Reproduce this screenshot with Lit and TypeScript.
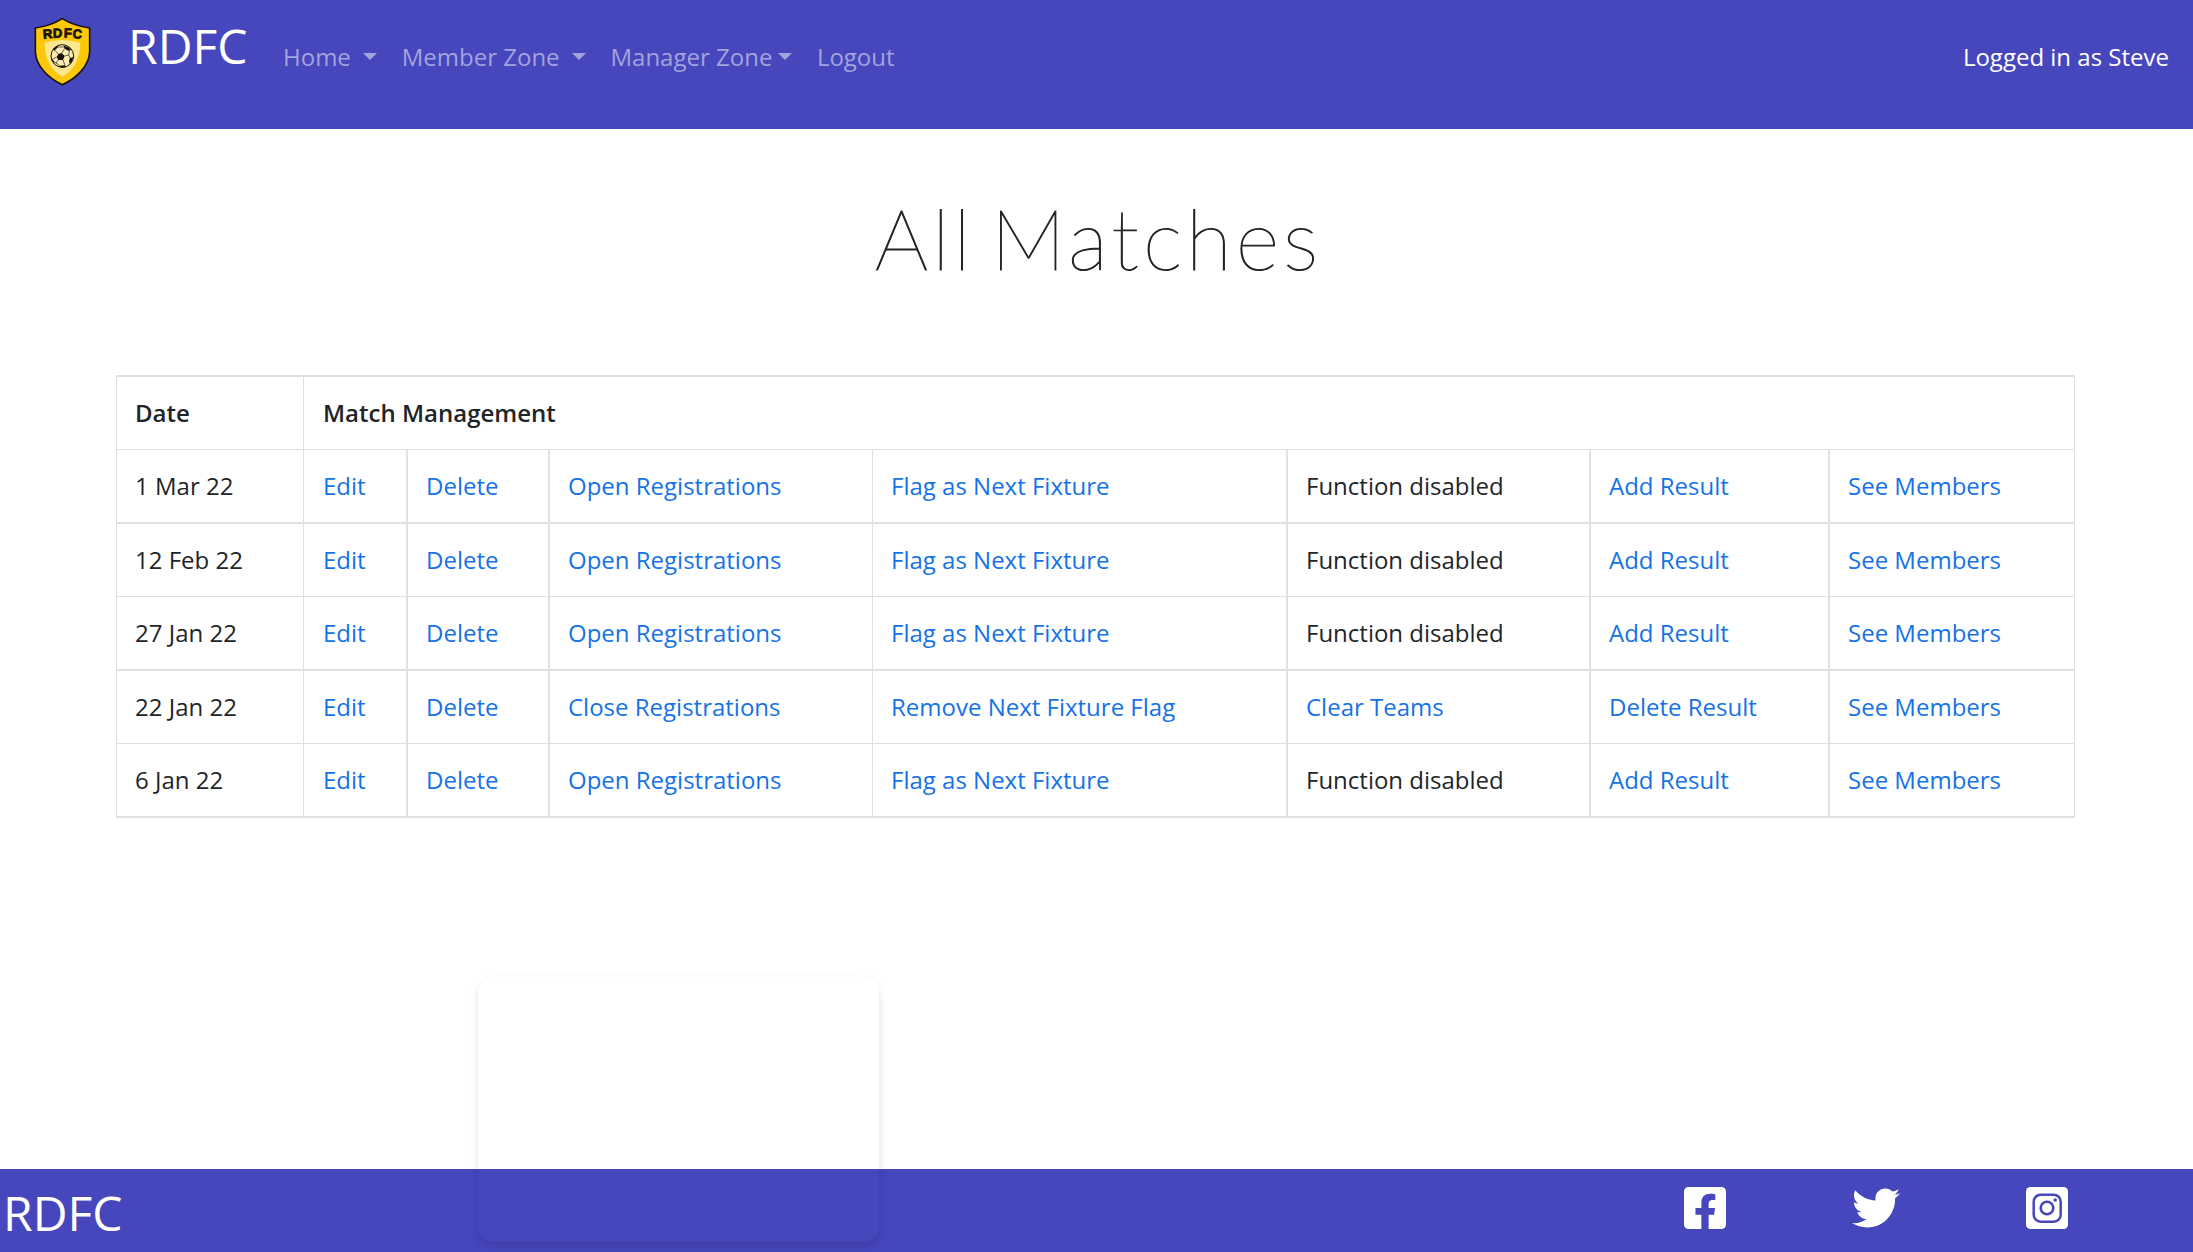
import { LitElement, html, css, svg } from "lit";
import { customElement } from "lit/decorators.js";

type Cell = { text: string; link?: boolean };
type Match = { date: string; actions: Cell[] };

const link = (text: string): Cell => ({ text, link: true });

const standard = (date: string): Match => ({
  date,
  actions: [
    link("Edit"),
    link("Delete"),
    link("Open Registrations"),
    link("Flag as Next Fixture"),
    { text: "Function disabled" },
    link("Add Result"),
    link("See Members"),
  ],
});

const MATCHES: Match[] = [
  standard("1 Mar 22"),
  standard("12 Feb 22"),
  standard("27 Jan 22"),
  {
    date: "22 Jan 22",
    actions: [
      link("Edit"),
      link("Delete"),
      link("Close Registrations"),
      link("Remove Next Fixture Flag"),
      link("Clear Teams"),
      link("Delete Result"),
      link("See Members"),
    ],
  },
  standard("6 Jan 22"),
];

const crest = svg`
  <path d="M127 26C103 41 76 50 46 54V126C48 166 82 204 127 224C172 204 207 166 209 126V54C179 50 151 41 127 26Z"
    fill="#fdc70a" stroke="#17140c" stroke-width="5" stroke-linejoin="round"/>
  <path d="M74 98Q127 82 181 98C181 142 164 178 127 200C90 178 74 142 74 98Z" fill="#fde68d"/>
  <text x="70 99 131 157" y="86 83 82 84" rotate="-5 -2 2 5" class="crest-text">RDFC</text>
  <circle cx="127" cy="138" r="34" fill="#fdedb0" stroke="#17140c" stroke-width="3"/>
  <path d="M115 132L125 129L134 138L129 150L115 150L110 141Z M130 107Q146 108 153 120L146 123L134 116Z
    M98 118Q104 110 113 107L114 112L103 122Z M150 144L160 141Q158 155 149 162L147 153Z
    M94 143L101 152L104 161Q95 155 94 143Z M119 167L135 166L138 171Q128 174 118 171Z" fill="#17140c"/>
  <path d="M125 129L134 116M134 138L146 135L150 144M146 135L148 123M129 150L135 166M115 150L108 159M119 167L108 159L102 155M110 141L99 147M115 132L105 121M114 111L131 111"
    fill="none" stroke="#17140c" stroke-width="2"/>
`;

@customElement("app-root")
export class AppRoot extends LitElement {
  static styles = css`
    :host {
      display: block;
      font-family: "Open Sans", sans-serif;
      font-size: 24px;
      line-height: 36px;
      color: #212529;
    }
    .page {
      position: relative;
      display: flex;
      flex-direction: column;
      height: 1252px;
      overflow: hidden;
      background: #fff;
    }
    .navbar {
      display: flex;
      align-items: flex-start;
      height: 129px;
      flex: none;
      box-sizing: border-box;
      padding: 14px 24px 0 32px;
      background: #4646bd;
    }
    .crest {
      display: block;
      width: 60px;
      height: 71px;
      margin-top: 2px;
      flex: none;
    }
    .crest-text {
      font-family: "Liberation Sans", sans-serif;
      font-weight: 700;
      font-size: 39px;
      fill: #17140c;
      stroke: #17140c;
      stroke-width: 2.5px;
    }
    .brand {
      margin-left: 36px;
      width: 155px;
      flex: none;
      font-size: 48px;
      line-height: 64px;
      color: #fff;
    }
    .nav-items {
      display: flex;
      flex: 1;
      margin: 0;
      padding: 25px 0 0;
      list-style: none;
    }
    .nav-item {
      display: flex;
      align-items: center;
      box-sizing: border-box;
      padding-right: 24.5px;
      color: #a3a3de;
      white-space: nowrap;
    }
    .caret {
      border-top: 7px solid;
      border-left: 7px solid transparent;
      border-right: 7px solid transparent;
      margin: -1px 0 0 6px;
    }
    .caret.spaced {
      margin-left: 12.4px;
    }
    .user {
      padding-top: 25px;
      color: #fff;
      white-space: nowrap;
    }
    .title {
      margin: 0;
      padding-top: 58px;
      padding-left: 4px;
      flex: none;
      height: 188px;
      text-align: center;
      font-family: Lato, sans-serif;
      font-weight: 100;
      font-size: 84px;
      line-height: 101px;
      letter-spacing: 4px;
      word-spacing: -12px;
      -webkit-text-stroke: 1px #212529;
    }
    .matches {
      width: 1959px;
      margin-left: 116px;
      flex: none;
      table-layout: fixed;
      border-collapse: separate;
      border-spacing: 0;
      border-top: 2px solid #dee0e2;
      border-left: 1px solid #dee0e2;
    }
    .cell {
      box-sizing: border-box;
      height: 74px;
      padding: 0 18px;
      text-align: left;
      vertical-align: middle;
      white-space: nowrap;
      font-weight: 400;
      border-right: 2px solid #dee0e2;
      border-bottom: 2px solid #dee0e2;
    }
    .row:nth-child(odd) .cell {
      height: 73px;
      border-bottom-width: 1px;
    }
    .cell.thin {
      border-right-width: 1px;
    }
    .cell.heading {
      font-weight: 600;
    }
    .cell:nth-child(2) {
      padding-left: 19px;
    }
    .c-date { width: 187px; }
    .c-edit { width: 104px; }
    .c-delete { width: 142px; }
    .c-reg { width: 323px; }
    .c-flag { width: 415px; }
    .c-teams { width: 303px; }
    .c-result { width: 239px; }
    .action {
      color: #1672e6;
      text-decoration: none;
    }
    .footer {
      display: flex;
      align-items: flex-start;
      box-sizing: border-box;
      height: 83px;
      flex: none;
      margin-top: auto;
      padding: 18px 125px 0 3px;
      background: #4646bd;
      color: #fff;
    }
    .footer-brand {
      flex: 1;
      font-size: 48px;
      line-height: 52px;
    }
    .social {
      display: flex;
      gap: 126px;
    }
    .icon {
      display: block;
      width: 42px;
      height: 42px;
    }
    .icon.wide {
      width: 48px;
      height: 48px;
      margin-top: -3px;
    }
    .panel {
      position: absolute;
      left: 478px;
      top: 977px;
      width: 401px;
      height: 265px;
      border-radius: 15px;
      box-shadow: 0 4px 9px rgba(0, 0, 0, 0.12);
    }
  `;

  private navItem(label: string, caret: string) {
    return html`<li class="nav-item">
      ${label}${caret ? html`<span class=${caret}></span>` : ""}
    </li>`;
  }

  render() {
    return html`
      <div class="page">
        <header class="navbar">
          <svg class="crest" viewBox="36 18 180 213">${crest}</svg>
          <span class="brand">RDFC</span>
          <ul class="nav-items">
            ${this.navItem("Home", "caret spaced")}
            ${this.navItem("Member Zone", "caret spaced")}
            ${this.navItem("Manager Zone", "caret")}
            ${this.navItem("Logout", "")}
          </ul>
          <span class="user">Logged in as Steve</span>
        </header>

        <h1 class="title">All Matches</h1>

        <table class="matches">
          <colgroup>
            <col class="c-date" /><col class="c-edit" /><col class="c-delete" />
            <col class="c-reg" /><col class="c-flag" /><col class="c-teams" />
            <col class="c-result" /><col />
          </colgroup>
          <tbody>
            <tr class="row">
              <th class="cell heading thin">Date</th>
              <th class="cell heading thin" colspan="7">Match Management</th>
            </tr>
            ${MATCHES.map(
              (m) => html`<tr class="row">
                <td class="cell thin">${m.date}</td>
                ${m.actions.map(
                  (a, i) => html`<td class=${i === 2 || i === 6 ? "cell thin" : "cell"}>
                    ${a.link ? html`<a class="action" href="#">${a.text}</a>` : a.text}
                  </td>`
                )}
              </tr>`
            )}
          </tbody>
        </table>

        <footer class="footer">
          <span class="footer-brand">RDFC</span>
          <div class="social">
            <svg class="icon" viewBox="0 32 448 448" fill="#fff">
              <path d="M400 32H48A48 48 0 0 0 0 80v352a48 48 0 0 0 48 48h137.25V327.69h-63V256h63v-54.64c0-62.15 37-96.48 93.67-96.48 27.14 0 55.52 4.84 55.52 4.84v61h-31.27c-30.81 0-40.42 19.12-40.42 38.73V256h68.78l-11 71.69h-57.78V480H400a48 48 0 0 0 48-48V80a48 48 0 0 0-48-48z"/>
            </svg>
            <svg class="icon wide" viewBox="0 0 512 512" fill="#fff">
              <path d="M459.37 151.716c.325 4.548.325 9.097.325 13.645 0 138.72-105.583 298.558-298.558 298.558-59.452 0-114.68-17.219-161.137-47.106 8.447.974 16.568 1.299 25.34 1.299 49.055 0 94.213-16.568 130.274-44.832-46.132-.975-84.792-31.188-98.112-72.772 6.498.974 12.995 1.624 19.818 1.624 9.421 0 18.843-1.3 27.614-3.573-48.081-9.747-84.143-51.98-84.143-102.985v-1.299c13.969 7.797 30.214 12.67 47.431 13.319-28.264-18.843-46.781-51.005-46.781-87.391 0-19.492 5.197-37.36 14.294-52.954 51.655 63.675 129.3 105.258 216.365 109.807-1.624-7.797-2.599-15.918-2.599-24.04 0-57.828 46.782-104.934 104.934-104.934 30.213 0 57.502 12.67 76.67 33.137 23.715-4.548 46.456-13.32 66.599-25.34-7.798 24.366-24.366 44.833-46.132 57.827 21.117-2.273 41.584-8.122 60.426-16.243-14.292 20.791-32.161 39.308-52.628 54.253z"/>
            </svg>
            <svg class="icon" viewBox="0 0 42 42" fill="none">
              <rect width="42" height="42" rx="4.5" fill="#fff"/>
              <rect x="7.7" y="7.7" width="27" height="27" rx="7" stroke="#4646bd" stroke-width="2.5"/>
              <circle cx="21" cy="21" r="6.3" stroke="#4646bd" stroke-width="2.6"/>
              <circle cx="29.2" cy="13" r="1.8" fill="#4646bd"/>
            </svg>
          </div>
        </footer>
        <div class="panel"></div>
      </div>
    `;
  }
}
